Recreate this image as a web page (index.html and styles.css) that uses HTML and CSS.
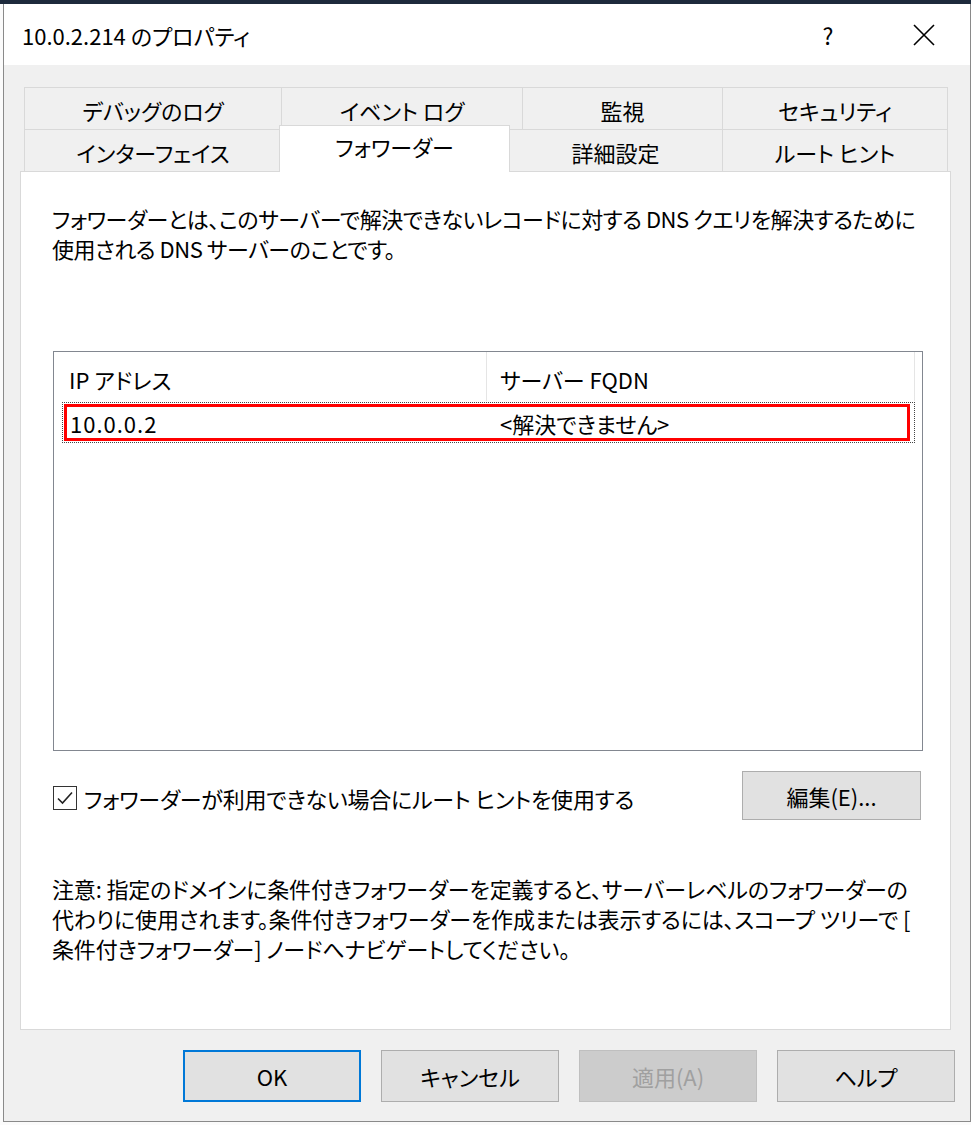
FILE: index.html
```html
<!DOCTYPE html>
<html lang="ja">
<head>
    <meta charset="UTF-8">
    <meta name="viewport" content="width=device-width, initial-scale=1.0">
    <title>10.0.2.214 のプロパティ</title>
    <link rel="stylesheet" href="styles.css">
</head>
<body>
    <div class="topbar"></div>
    <div class="window">
        <div class="titlebar">
            <span class="title">10.0.2.214 のプロパティ</span>
            <span class="help">?</span>
            <span class="close">
                <svg width="22" height="22" viewBox="0 0 22 22"><path d="M1 1L21 21M21 1L1 21" stroke="#000" stroke-width="1.6" fill="none"/></svg>
            </span>
        </div>
        <div class="client">
            <div class="tabs">
                <div class="tabrow row1">
                    <div class="tab">デバッグのログ</div>
                    <div class="tab">イベント ログ</div>
                    <div class="tab">監視</div>
                    <div class="tab">セキュリティ</div>
                </div>
                <div class="tabrow row2">
                    <div class="tab">インターフェイス</div>
                    <div class="tab active">フォワーダー</div>
                    <div class="tab">詳細設定</div>
                    <div class="tab">ルート ヒント</div>
                </div>
            </div>
            <div class="panel">
                <p class="desc">フォワーダーとは、このサーバーで解決できないレコードに対する DNS クエリを解決するために<br>使用される DNS サーバーのことです。</p>
                <div class="list">
                    <div class="list-head">
                        <div class="col col-ip">IP アドレス</div>
                        <div class="col col-fqdn">サーバー FQDN</div>
                    </div>
                    <div class="list-row">
                        <div class="mark">
                            <span class="cell-ip">10.0.0.2</span>
                            <span class="cell-fqdn">&lt;解決できません&gt;</span>
                        </div>
                    </div>
                </div>
                <div class="options">
                    <label class="check">
                        <span class="box">
                            <svg width="20" height="20" viewBox="0 0 20 20"><path d="M3 10.5L7.5 15L17 4.5" stroke="#222" stroke-width="1.6" fill="none"/></svg>
                        </span>
                        フォワーダーが利用できない場合にルート ヒントを使用する
                    </label>
                    <button class="btn edit">編集(E)...</button>
                </div>
                <p class="note">注意: 指定のドメインに条件付きフォワーダーを定義すると、サーバーレベルのフォワーダーの<br>代わりに使用されます。条件付きフォワーダーを作成または表示するには、スコープ ツリーで [<br>条件付きフォワーダー] ノードへナビゲートしてください。</p>
            </div>
            <div class="buttons">
                <button class="btn default">OK</button>
                <button class="btn">キャンセル</button>
                <button class="btn disabled">適用(A)</button>
                <button class="btn">ヘルプ</button>
            </div>
        </div>
    </div>
</body>
</html>
```

FILE: styles.css
```css
*{
    padding: 0;
    margin: 0;
    box-sizing: border-box;
}
body{
    background: #fbfbfb;
    font-family: "Noto Sans CJK JP", "Noto Sans", sans-serif;
    font-size: 22px;
    font-feature-settings: "palt";
    color: #000;
}
.topbar{
    height: 4px;
    background: #1d2a3c;
}
.window{
    margin-left: 3px;
    width: 968px;
    border: 1px solid #8a8a8a;
    border-top: none;
}
.titlebar{
    height: 61px;
    background: #fff;
    display: flex;
    align-items: center;
    padding-left: 18px;
}
.title{
    flex: 1;
    font-size: 22px;
}
.help{
    width: 40px;
    font-size: 23px;
    margin-right: 65px;
    text-align: center;
}
.close{
    display: flex;
    margin-right: 35px;
}
.client{
    background: #f0f0f0;
    padding: 22px 19px 19px 16px;
}
.tabs{
    margin-left: 4px;
}
.tabrow{
    display: grid;
    height: 42px;
}
.row1{
    grid-template-columns: 257px 241px 200px 225px;
}
.row2{
    grid-template-columns: 257px 227px 214px 225px;
}
.tab{
    border: 1px solid #d9d9d9;
    border-bottom: none;
    margin-right: -1px;
    display: flex;
    justify-content: center;
    align-items: center;
    padding-top: 2px;
}
.tab.active{
    background: #fff;
    margin: -4px -2px -1px -2px;
    padding: 0 0 6px;
    position: relative;
    z-index: 1;
}
.panel{
    height: 859px;
    background: #fff;
    border: 1px solid #d9d9d9;
    padding: 31px 27px 0 32px;
}
.desc, .note{
    line-height: 30px;
    margin-left: -1px;
    white-space: nowrap;
}
.desc{
    letter-spacing: -0.45px;
}
.note{
    margin-top: 53px;
    letter-spacing: -0.15px;
}
.list{
    margin-top: 88px;
    height: 400px;
    border: 1px solid #828790;
}
.list-head{
    display: flex;
    height: 49px;
}
.col{
    display: flex;
    align-items: center;
    padding-top: 4px;
}
.col-ip{
    width: 433px;
    padding-left: 15px;
    border-right: 1px solid #e5e5e5;
}
.col-fqdn{
    width: 428px;
    padding-left: 13px;
    border-right: 1px solid #e5e5e5;
}
.list-row{
    margin: 1px 0 0 8px;
    width: 853px;
    height: 41px;
    border: 1px dotted #444;
    padding: 1px 4px 1px 1px;
}
.mark{
    height: 100%;
    border: 3px solid #ff0000;
    display: flex;
    align-items: center;
}
.cell-ip{
    width: 433px;
    padding-left: 3px;
    letter-spacing: 1px;
}
.options{
    margin-top: 20px;
    height: 49px;
    display: flex;
    align-items: center;
    justify-content: space-between;
}
.check{
    display: flex;
    align-items: center;
    margin-top: 5px;
    letter-spacing: -0.2px;
}
.box{
    width: 24px;
    height: 24px;
    border: 1px solid #333;
    background: #fff;
    display: flex;
    justify-content: center;
    align-items: center;
    margin-right: 7px;
}
.btn{
    font-family: inherit;
    font-size: 22px;
    font-feature-settings: "palt";
    background: #e1e1e1;
    border: 1px solid #adadad;
    color: #000;
    width: 178px;
    height: 52px;
}
.edit{
    width: 179px;
    height: 49px;
    margin-right: 2px;
}
.buttons{
    display: flex;
    justify-content: flex-end;
    gap: 20px;
    margin: 20px -4px 0 0;
}
.btn.default{
    border: 2px solid #0078d7;
}
.btn.disabled{
    background: #cccccc;
    border-color: #bfbfbf;
    color: #a0a0a0;
}
```
